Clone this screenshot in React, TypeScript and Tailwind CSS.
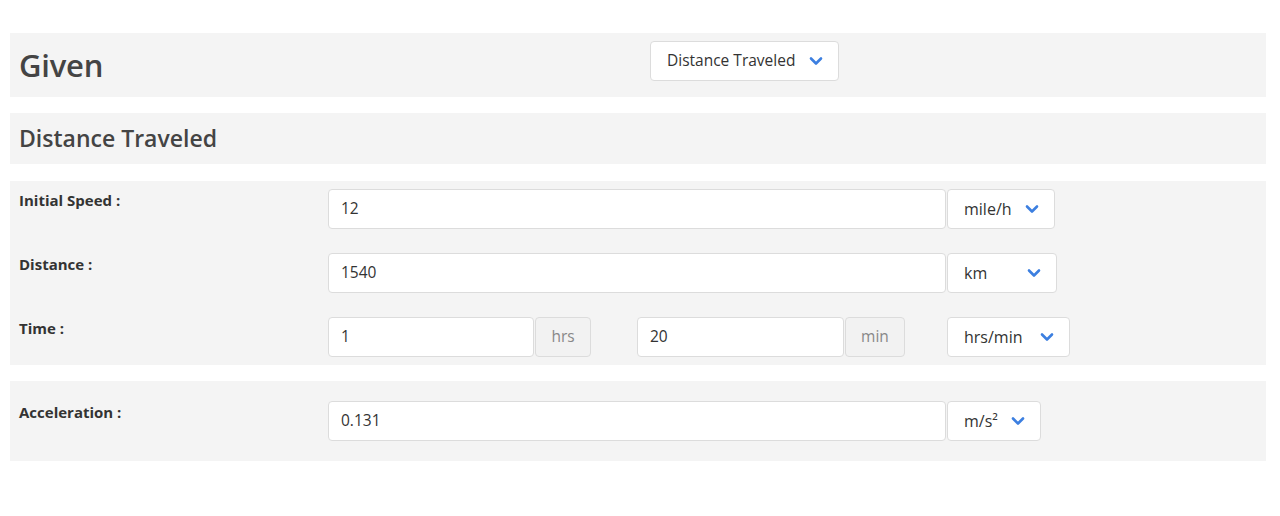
interface UnitSelectProps {
  label: string;
  width: string;
}

function Chevron() {
  return (
    <svg width="14" height="10" viewBox="0 0 14 10" className="text-[#3c7fe0]">
      <polyline
        points="2,2.5 7,7.5 12,2.5"
        fill="none"
        stroke="currentColor"
        strokeWidth="2.6"
        strokeLinecap="round"
        strokeLinejoin="round"
      />
    </svg>
  );
}

function UnitSelect({ label, width }: UnitSelectProps) {
  return (
    <div
      className={`${width} h-10 ml-px flex items-center justify-between pl-4 pr-[15px] bg-white border border-[#dcdcdc] rounded text-base text-[#333]`}
    >
      <span>{label}</span>
      <Chevron />
    </div>
  );
}

function TextInput({ value, width }: { value: string; width: string }) {
  return (
    <div
      className={`${width} h-10 flex items-center px-3 bg-white border border-[#dcdcdc] rounded text-[15.5px] text-[#333]`}
    >
      {value}
    </div>
  );
}

function Addon({ label, width }: { label: string; width: string }) {
  return (
    <div
      className={`${width} h-10 ml-px flex items-center justify-center bg-[#f2f2f2] border border-[#dcdcdc] rounded text-[15.5px] text-[#888]`}
    >
      {label}
    </div>
  );
}

function Row({ label, children }: { label: string; children: React.ReactNode }) {
  return (
    <div className="flex items-start">
      <div className="w-[318px] pl-[9px] text-[15px] font-bold text-[#333]">
        {label}
      </div>
      <div className="flex items-center">{children}</div>
    </div>
  );
}

export default function App() {
  return (
    <div
      className="min-h-[516px] bg-white pt-[33px] text-[#333]"
      style={{ fontFamily: '"Open Sans", "Noto Sans", sans-serif' }}
    >
      <div className="w-[1256px] ml-[10px]">
        {/* Given */}
        <div className="h-16 bg-[#f4f4f4] flex">
          <div className="w-[628px] pl-[9px] flex items-center">
            <h1 className="text-[31px] font-semibold text-[#444] tracking-[-0.2px] mt-[1px]">
              Given
            </h1>
          </div>
          <div className="pl-3 pt-2">
            <div className="w-[189px] h-10 flex items-center justify-between pl-4 pr-[15px] bg-white border border-[#dcdcdc] rounded text-[15.5px] text-[#333]">
              <span>Distance Traveled</span>
              <Chevron />
            </div>
          </div>
        </div>

        {/* Section title */}
        <div className="mt-4 h-[51px] bg-[#f4f4f4] flex items-center pl-[9px]">
          <h2 className="text-[23px] font-semibold text-[#444]">Distance Traveled</h2>
        </div>

        {/* Inputs */}
        <div className="mt-[17px] bg-[#f4f4f4] py-2 flex flex-col gap-6">
          <Row label="Initial Speed :">
            <TextInput value="12" width="w-[618px]" />
            <UnitSelect label="mile/h" width="w-[108px]" />
          </Row>
          <Row label="Distance :">
            <TextInput value="1540" width="w-[618px]" />
            <UnitSelect label="km" width="w-[110px]" />
          </Row>
          <Row label="Time :">
            <div className="w-[309px] flex items-center">
              <TextInput value="1" width="w-[206px]" />
              <Addon label="hrs" width="w-[56px]" />
            </div>
            <div className="w-[309px] flex items-center">
              <TextInput value="20" width="w-[207px]" />
              <Addon label="min" width="w-[60px]" />
            </div>
            <UnitSelect label="hrs/min" width="w-[123px]" />
          </Row>
        </div>

        {/* Result */}
        <div className="mt-4 bg-[#f4f4f4] pt-5 pb-5">
          <Row label="Acceleration :">
            <TextInput value="0.131" width="w-[618px]" />
            <UnitSelect label="m/s²" width="w-[94px]" />
          </Row>
        </div>
      </div>
    </div>
  );
}
